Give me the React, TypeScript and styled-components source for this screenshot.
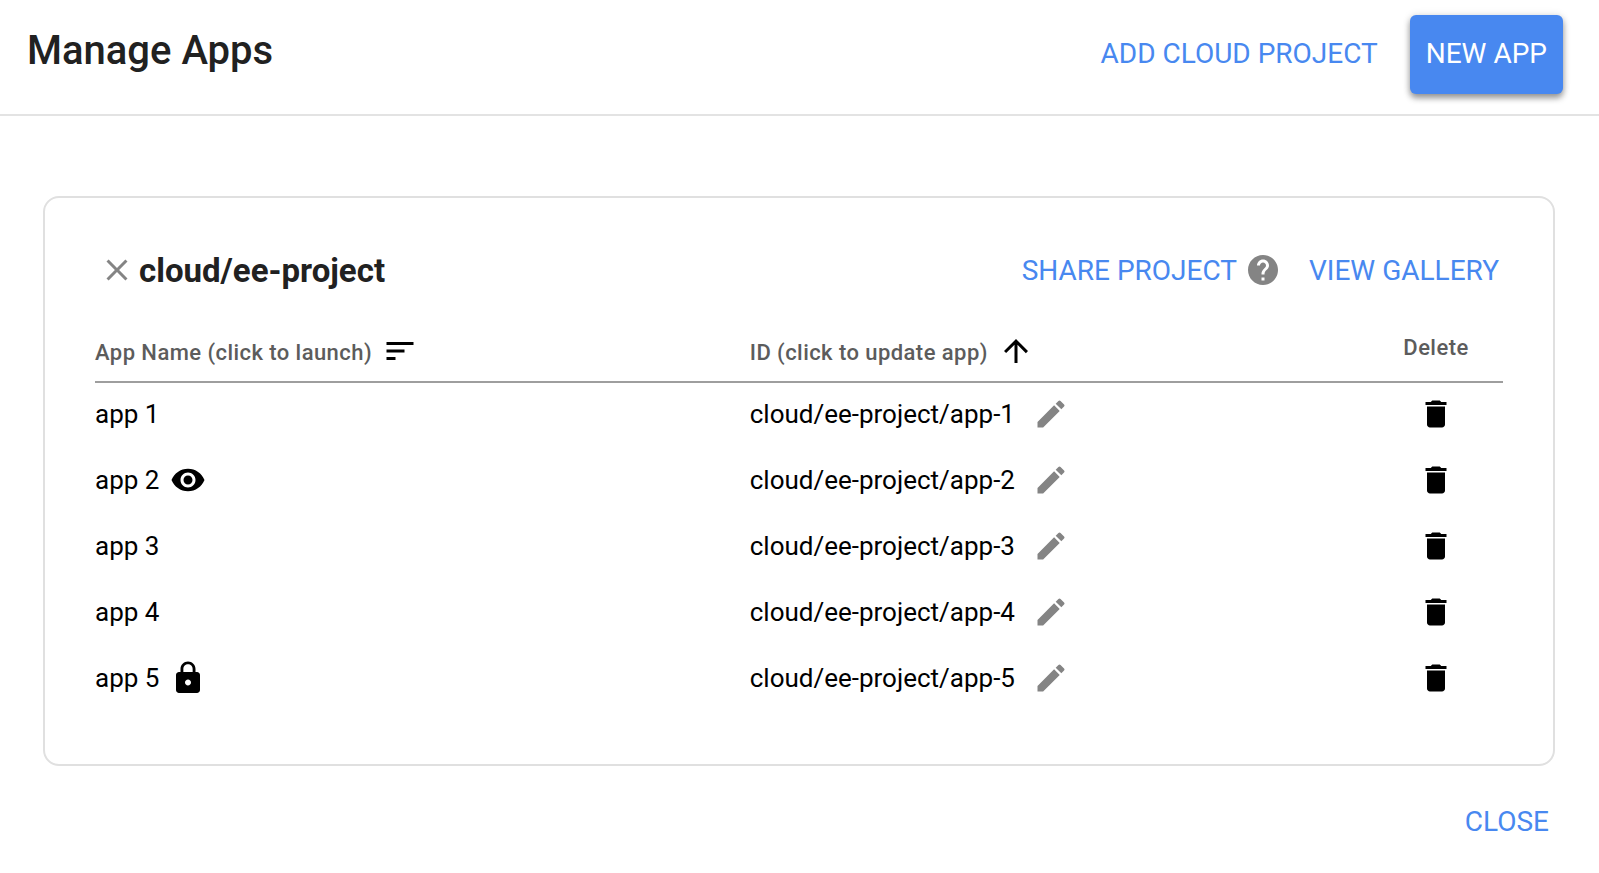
import React from "react";
import styled, { createGlobalStyle } from "styled-components";
import {
  MdArrowUpward,
  MdClose,
  MdDelete,
  MdEdit,
  MdHelp,
  MdLock,
  MdSort,
  MdVisibility,
} from "react-icons/md";

const GlobalStyle = createGlobalStyle`
  *, *::before, *::after { box-sizing: border-box; }
  body {
    margin: 0;
    background: #fff;
    color: #000;
    font-family: Roboto, "Liberation Sans", sans-serif;
  }
  svg { display: block; flex: none; }
`;

const Header = styled.header`
  display: flex;
  align-items: flex-start;
  justify-content: space-between;
  padding: 15px 36px 20px 27px;
  border-bottom: 2px solid #e3e3e3;
`;

const PageTitle = styled.h1`
  margin: 0;
  font-size: 40px;
  font-weight: 500;
  line-height: 72px;
  color: #212121;
`;

const HeaderActions = styled.div`
  display: flex;
  gap: 16px;
`;

const Button = styled.button<{ $raised?: boolean }>`
  padding: 0 16px 2px;
  border: 0;
  border-radius: 6px;
  font: 400 28px / 77px Roboto, "Liberation Sans", sans-serif;
  text-transform: uppercase;
  white-space: nowrap;
  cursor: pointer;
  color: ${(p) => (p.$raised ? "#fff" : "#4888f0")};
  background: ${(p) => (p.$raised ? "#4888f0" : "transparent")};
  box-shadow: ${(p) =>
    p.$raised ? "0 4px 6px rgba(0, 0, 0, 0.4), 0 0 8px rgba(0, 0, 0, 0.1)" : "none"};
`;

const TextLink = styled.a`
  padding-top: 2px;
  font-size: 28px;
  line-height: 40px;
  color: #4888f0;
  text-decoration: none;
  text-transform: uppercase;
  white-space: nowrap;
`;

const IconButton = styled.button<{ $muted?: boolean }>`
  display: inline-flex;
  padding: 0;
  border: 0;
  background: none;
  font-size: 36px;
  cursor: pointer;
  color: ${(p) => (p.$muted ? "#848484" : "#000")};
`;

const Card = styled.section`
  margin: 80px 44px 0 43px;
  padding: 52px 50px 51px;
  border: 2px solid #e0e0e0;
  border-radius: 16px;
`;

const CardHeader = styled.div`
  display: flex;
  align-items: center;
  justify-content: space-between;
  height: 40px;
  margin-bottom: 44px;
  padding: 0 4px;
`;

const ProjectName = styled.div`
  display: flex;
  align-items: center;
  gap: 4px;
`;

const ProjectTitle = styled.h2`
  margin: 0;
  padding-top: 2px;
  font-size: 33px;
  font-weight: 700;
  line-height: 40px;
  color: #212121;
`;

const ProjectLinks = styled.div`
  display: flex;
  align-items: center;
`;

const HelpButton = styled(IconButton)`
  margin: 0 28px 0 8px;
`;

const AppTable = styled.table`
  width: 100%;
  table-layout: fixed;
  border-spacing: 0;
`;

const HeadCell = styled.th<{ $width?: string; $center?: boolean }>`
  width: ${(p) => p.$width ?? "auto"};
  padding: 0 0 13px;
  border-bottom: 2px solid #9e9e9e;
  vertical-align: top;
  text-align: ${(p) => (p.$center ? "center" : "left")};
  font-size: 22px;
  font-weight: 500;
  line-height: 28px;
  letter-spacing: 0.02em;
  color: #5c5c5c;
`;

const HeadContent = styled.div`
  display: flex;
  align-items: center;
  gap: 10px;
  height: 34px;
`;

const HeadLabel = styled.span`
  padding-top: 4px;
`;

const Cell = styled.td`
  padding: 13px 0 17px;
  font-size: 26px;
  line-height: 36px;
`;

const CellContent = styled.div<{ $gap?: number; $center?: boolean }>`
  display: flex;
  align-items: center;
  justify-content: ${(p) => (p.$center ? "center" : "flex-start")};
  gap: ${(p) => p.$gap ?? 0}px;
  height: 36px;
`;

const AppLink = styled.a`
  color: #000;
  text-decoration: none;
`;

const Footer = styled.footer`
  display: flex;
  justify-content: flex-end;
  padding: 17px 34px 12px;
`;

type Status = "public" | "private";

const apps: { name: string; id: string; status?: Status }[] = [
  { name: "app 1", id: "cloud/ee-project/app-1" },
  { name: "app 2", id: "cloud/ee-project/app-2", status: "public" },
  { name: "app 3", id: "cloud/ee-project/app-3" },
  { name: "app 4", id: "cloud/ee-project/app-4" },
  { name: "app 5", id: "cloud/ee-project/app-5", status: "private" },
];

function StatusIcon({ status }: { status: Status }) {
  return status === "public" ? <MdVisibility size={36} /> : <MdLock size={36} />;
}

export default function App() {
  return (
    <>
      <GlobalStyle />
      <Header>
        <PageTitle>Manage Apps</PageTitle>
        <HeaderActions>
          <Button type="button">Add Cloud Project</Button>
          <Button type="button" $raised>New App</Button>
        </HeaderActions>
      </Header>
      <main>
        <Card>
          <CardHeader>
            <ProjectName>
              <IconButton type="button" $muted aria-label="Remove project">
                <MdClose />
              </IconButton>
              <ProjectTitle>cloud/ee-project</ProjectTitle>
            </ProjectName>
            <ProjectLinks>
              <TextLink href="#share">Share Project</TextLink>
              <HelpButton type="button" $muted aria-label="Help with sharing">
                <MdHelp />
              </HelpButton>
              <TextLink href="#gallery">View Gallery</TextLink>
            </ProjectLinks>
          </CardHeader>
          <AppTable>
            <thead>
              <tr>
                <HeadCell scope="col" $width="46.5%">
                  <HeadContent>
                    <HeadLabel>App Name (click to launch)</HeadLabel>
                    <IconButton type="button" aria-label="Sort by app name">
                      <MdSort />
                    </IconButton>
                  </HeadContent>
                </HeadCell>
                <HeadCell scope="col">
                  <HeadContent>
                    <HeadLabel>ID (click to update app)</HeadLabel>
                    <IconButton type="button" aria-label="Sort by ID">
                      <MdArrowUpward />
                    </IconButton>
                  </HeadContent>
                </HeadCell>
                <HeadCell scope="col" $width="134px" $center>Delete</HeadCell>
              </tr>
            </thead>
            <tbody>
              {apps.map((app) => (
                <tr key={app.id}>
                  <Cell>
                    <CellContent $gap={11}>
                      <AppLink href={`#${app.name}`}>{app.name}</AppLink>
                      {app.status && <StatusIcon status={app.status} />}
                    </CellContent>
                  </Cell>
                  <Cell>
                    <CellContent $gap={18}>
                      <AppLink href={`#${app.id}`}>{app.id}</AppLink>
                      <IconButton type="button" $muted aria-label={`Edit ${app.name}`}>
                        <MdEdit />
                      </IconButton>
                    </CellContent>
                  </Cell>
                  <Cell>
                    <CellContent $center>
                      <IconButton type="button" aria-label={`Delete ${app.name}`}>
                        <MdDelete />
                      </IconButton>
                    </CellContent>
                  </Cell>
                </tr>
              ))}
            </tbody>
          </AppTable>
        </Card>
      </main>
      <Footer>
        <Button type="button">Close</Button>
      </Footer>
    </>
  );
}
